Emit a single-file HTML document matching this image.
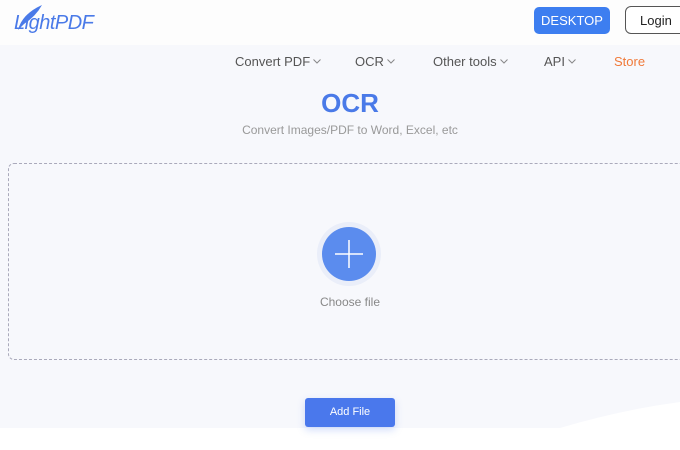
<!DOCTYPE html>
<html><head><style>
body{margin:0;width:680px;height:450px;overflow:hidden;background:#fff;font-family:"Liberation Sans",sans-serif;position:relative}
.hdr{position:absolute;left:0;top:0;width:680px;height:45px;background:#fdfdfd}
.main{position:absolute;left:0;top:45px;width:680px;height:383px;background:#f7f8fc}
.logo{position:absolute;left:14px;top:12px;font-style:italic;font-size:20px;color:#4a7ae8;letter-spacing:-0.5px}
.desk{position:absolute;left:534px;top:7px;width:76px;height:27px;background:#3d7ef0;border-radius:5px;color:#fff;font-size:13px;text-align:center;line-height:27px}
.login{position:absolute;left:625px;top:6px;width:70px;height:28px;border:1px solid #555;border-radius:6px;color:#222;font-size:13px;line-height:27px;padding-left:14px;box-sizing:border-box;background:#fff}
.nav{position:absolute;top:54px;font-size:13px;color:#555}
.nav svg{margin-left:3px;vertical-align:2px}
h1{position:absolute;left:0;width:700px;top:88px;margin:0;text-align:center;font-size:26px;color:#4a7ae8;font-weight:bold}
.sub{position:absolute;left:0;width:700px;top:123px;text-align:center;font-size:12px;color:#999}
.box{position:absolute;left:8px;top:163px;width:700px;height:197px;border:1px dashed #aab;border-radius:6px;box-sizing:border-box}
.ring{position:absolute;left:317px;top:222px;width:64px;height:64px;border-radius:50%;background:#eaeef9}
.circ{position:absolute;left:322px;top:227px;width:54px;height:54px;border-radius:50%;background:#5b8cee}
.cf{position:absolute;left:0;width:700px;top:295px;text-align:center;font-size:12px;color:#888}
.add{position:absolute;left:305px;top:398px;width:90px;height:29px;background:#4a78ec;border-radius:3px;color:#fff;font-size:11px;text-align:center;line-height:29px;box-shadow:0 3px 8px rgba(74,120,236,.25)}
</style></head><body>
<div class="hdr"></div><div class="main"></div>
<svg style="position:absolute;left:0;top:380px" width="680" height="70"><path d="M560 48 Q620 30 680 22 L680 70 L560 70Z" fill="#fff"/></svg>
<div class="logo">LightPDF</div>
<svg style="position:absolute;left:14px;top:2px" width="30" height="30"><path d="M4 28 Q8 12 28 3 Q22 14 10 22Z" fill="#4a7ae8"/></svg>
<div class="desk">DESKTOP</div>
<div class="login">Login</div>
<div class="nav" style="left:235px">Convert PDF<svg width="8" height="5"><path d="M0.5 0.5L4 4L7.5 0.5" fill="none" stroke="#888"/></svg></div>
<div class="nav" style="left:355px">OCR<svg width="8" height="5"><path d="M0.5 0.5L4 4L7.5 0.5" fill="none" stroke="#888"/></svg></div>
<div class="nav" style="left:433px">Other tools<svg width="8" height="5"><path d="M0.5 0.5L4 4L7.5 0.5" fill="none" stroke="#888"/></svg></div>
<div class="nav" style="left:544px">API<svg width="8" height="5"><path d="M0.5 0.5L4 4L7.5 0.5" fill="none" stroke="#888"/></svg></div>
<div class="nav" style="left:614px;color:#f07a3a">Store</div>
<h1>OCR</h1>
<div class="sub">Convert Images/PDF to Word, Excel, etc</div>
<div class="box"></div>
<div class="ring"></div><div class="circ"></div>
<svg style="position:absolute;left:322px;top:227px" width="54" height="54"><path d="M27 13V41M13 27H41" stroke="#fff" stroke-width="1.5"/></svg>
<div class="cf">Choose file</div>
<div class="add">Add File</div>
</body></html>
